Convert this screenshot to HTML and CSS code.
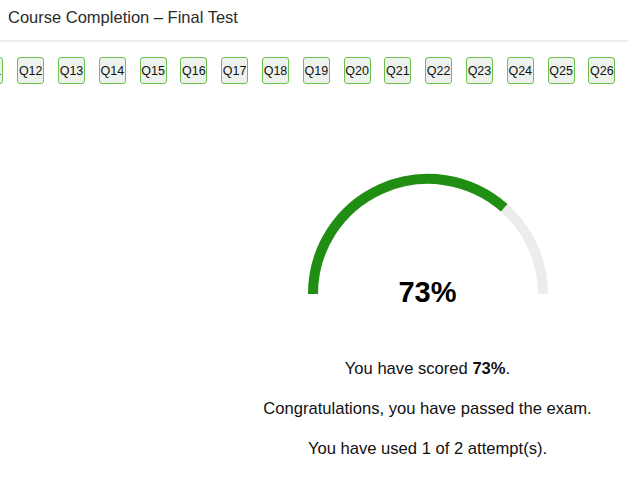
FILE: index.html
```html
<!DOCTYPE html>
<html>
<head>
<meta charset="utf-8">
<link rel="stylesheet" href="styles.css">
</head>
<body>
<header class="header">Course Completion – Final Test</header>
<nav class="qstrip">
  <div class="qtrack">
    <span class="q">Q11</span><span class="q">Q12</span><span class="q">Q13</span><span class="q">Q14</span><span class="q">Q15</span><span class="q">Q16</span><span class="q">Q17</span><span class="q">Q18</span><span class="q">Q19</span><span class="q">Q20</span><span class="q">Q21</span><span class="q">Q22</span><span class="q">Q23</span><span class="q">Q24</span><span class="q">Q25</span><span class="q">Q26</span>
  </div>
</nav>
<main class="result">
  <div class="aside"></div>
  <section class="score">
    <div class="gauge">
      <svg width="250" height="130" viewBox="0 0 250 130">
        <path d="M10 125 A115 115 0 0 1 240 125" fill="none" stroke="#ececec" stroke-width="10"/>
        <path d="M10 125 A115 115 0 0 1 201.2 38.8" fill="none" stroke="#1f8e12" stroke-width="10"/>
      </svg>
      <div class="pct">73%</div>
    </div>
    <p class="line">You have scored <b>73%</b>.</p>
    <p class="line">Congratulations, you have passed the exam.</p>
    <p class="line">You have used 1 of 2 attempt(s).</p>
  </section>
</main>
</body>
</html>
```
FILE: styles.css
```css
html, body { margin: 0; padding: 0; background: #fff; }
body { font-family: "Liberation Sans", Arial, sans-serif; color: #111; width: 628px; height: 483px; overflow: hidden; }
.header {
  height: 42px;
  box-sizing: border-box;
  padding: 6px 0 0 8px;
  font-size: 16.5px;
  line-height: 22px;
  color: #2b2b2b;
  border-bottom: 2px solid #ececec;
}
.qstrip { overflow: hidden; height: 40px; padding-top: 15px; }
.qtrack { display: flex; gap: 13.8px; margin-left: -23.6px; }
.q {
  flex: 0 0 auto;
  width: 27px;
  height: 27px;
  box-sizing: border-box;
  border: 1px solid #6cc24a;
  border-radius: 3px;
  background: #eef2ec;
  font-size: 12.5px;
  display: flex;
  align-items: center;
  justify-content: center;
  color: #111;
}
.result { display: flex; }
.aside { width: 227px; flex: 0 0 227px; }
.score { flex: 1; display: flex; flex-direction: column; align-items: center; padding-top: 72px; }
.gauge { position: relative; width: 250px; height: 135px; }
.gauge svg { display: block; }
.pct {
  position: absolute;
  left: 0; right: 0; top: 107px;
  text-align: center;
  font-size: 29px;
  font-weight: 700;
  color: #000;
}
.line { margin: 0; font-size: 16.6px; line-height: 40px; text-align: center; }
.score .line:first-of-type { margin-top: 45px; }
```
